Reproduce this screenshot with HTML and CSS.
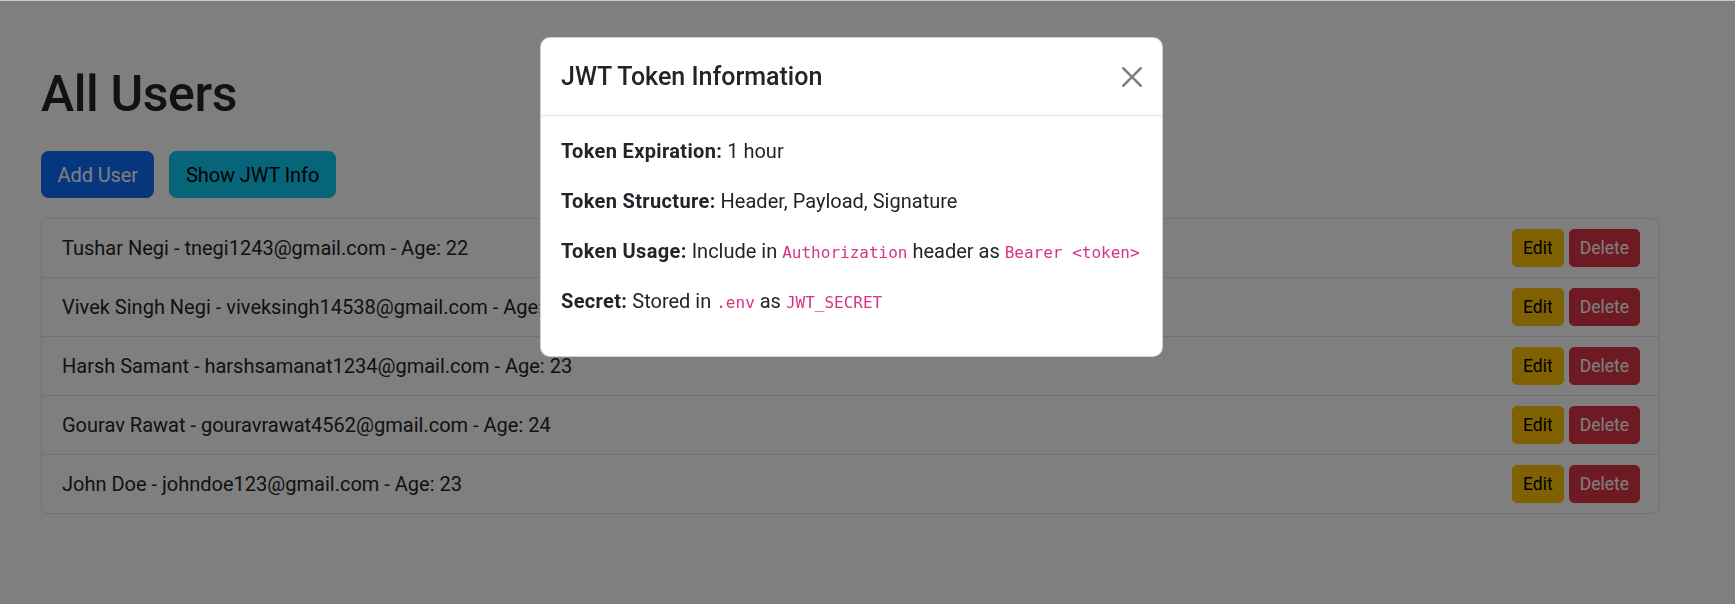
FILE: index.html
```html
<!DOCTYPE html>
<html lang="en">
<head>
<meta charset="utf-8">
<title>All Users</title>
<link rel="stylesheet" href="styles.css">
</head>
<body>
<main class="container">
  <h1 class="page-title">All Users</h1>
  <div class="toolbar">
    <button class="btn btn-primary">Add User</button>
    <button class="btn btn-info">Show JWT Info</button>
  </div>
  <ul class="user-list">
    <li class="user-item"><span>Tushar Negi - tnegi1243@gmail.com - Age: 22</span><div class="actions"><button class="btn-sm btn-warning">Edit</button><button class="btn-sm btn-danger">Delete</button></div></li>
    <li class="user-item"><span>Vivek Singh Negi - viveksingh14538@gmail.com - Age: 22</span><div class="actions"><button class="btn-sm btn-warning">Edit</button><button class="btn-sm btn-danger">Delete</button></div></li>
    <li class="user-item"><span>Harsh Samant - harshsamanat1234@gmail.com - Age: 23</span><div class="actions"><button class="btn-sm btn-warning">Edit</button><button class="btn-sm btn-danger">Delete</button></div></li>
    <li class="user-item"><span>Gourav Rawat - gouravrawat4562@gmail.com - Age: 24</span><div class="actions"><button class="btn-sm btn-warning">Edit</button><button class="btn-sm btn-danger">Delete</button></div></li>
    <li class="user-item"><span>John Doe - johndoe123@gmail.com - Age: 23</span><div class="actions"><button class="btn-sm btn-warning">Edit</button><button class="btn-sm btn-danger">Delete</button></div></li>
  </ul>
</main>

<div class="backdrop"></div>

<div class="modal">
  <div class="modal-header">
    <h5 class="modal-title">JWT Token Information</h5>
    <svg class="btn-close" width="20" height="20" viewBox="0 0 16 16" aria-label="Close"><path d="M.293.293a1 1 0 0 1 1.414 0L8 6.586 14.293.293a1 1 0 1 1 1.414 1.414L9.414 8l6.293 6.293a1 1 0 0 1-1.414 1.414L8 9.414l-6.293 6.293a1 1 0 0 1-1.414-1.414L6.586 8 .293 1.707a1 1 0 0 1 0-1.414z"/></svg>
  </div>
  <div class="modal-body">
    <p><strong>Token Expiration:</strong> 1 hour</p>
    <p><strong>Token Structure:</strong> Header, Payload, Signature</p>
    <p><strong>Token Usage:</strong> Include in <code>Authorization</code> header as <code>Bearer &lt;token&gt;</code></p>
    <p><strong>Secret:</strong> Stored in <code>.env</code> as <code>JWT_SECRET</code></p>
  </div>
</div>
</body>
</html>
```
FILE: styles.css
```css
* { box-sizing: border-box; }
html, body { margin: 0; padding: 0; }
body {
  font-family: Roboto, "Open Sans", sans-serif;
  font-size: 20px;
  line-height: 1.5;
  color: #212529;
  background: #fff;
  border-top: 1px solid #cbcbcb;
  min-height: 604px;
}
.container {
  margin-left: 41px;
  width: 1619px;
}
.page-title {
  margin: 63px 0 27px;
  font-size: 50px;
  font-weight: 500;
  line-height: 60px;
  letter-spacing: -0.4px;
}
.toolbar {
  display: flex;
  gap: 15px;
  margin-bottom: 20px;
}
.btn {
  font-family: inherit;
  font-size: 20px;
  line-height: 30px;
  padding: 7.5px 15.5px;
  border: 1px solid transparent;
  border-radius: 7.5px;
  letter-spacing: -0.1px;
  cursor: pointer;
}
.btn-primary { background: #0d6efd; border-color: #0d6efd; color: #fff; }
.btn-info { background: #0dcaf0; border-color: #0dcaf0; color: #000; }
.user-list {
  list-style: none;
  margin: 0;
  padding: 0;
  border: 1px solid #dee2e6;
  border-radius: 7.5px;
}
.user-item {
  display: flex;
  justify-content: space-between;
  align-items: center;
  padding: 10px 19px 10px 20px;
  border-bottom: 1px solid #dee2e6;
  height: 59px;
}
.user-item:last-child { border-bottom: none; height: 58px; }
.actions { display: flex; gap: 5px; }
.btn-sm {
  font-family: inherit;
  font-size: 17.5px;
  line-height: 26px;
  padding: 5px 10px;
  border: 1px solid transparent;
  border-radius: 5px;
  height: 38px;
}
.btn-warning { background: #ffc107; border-color: #ffc107; color: #000; }
.btn-danger { background: #dc3545; border-color: #dc3545; color: #fff; }
.backdrop {
  position: fixed;
  top: 1px; left: 0; right: 0; bottom: 0;
  background: rgba(0, 0, 0, 0.5);
}
.modal {
  position: absolute;
  top: 37px;
  left: 540px;
  width: 623px;
  background: #fff;
  border: 1px solid rgba(0, 0, 0, 0.175);
  border-radius: 10px;
}
.modal-header {
  display: flex;
  align-items: center;
  justify-content: space-between;
  padding: 20px;
  border-bottom: 1px solid #dee2e6;
  height: 78px;
}
.modal-title {
  margin: 0;
  font-size: 25px;
  font-weight: 500;
  line-height: 37.5px;
}
.btn-close { fill: #000; opacity: 0.5; display: block; }
.modal-body { padding: 20px; }
.modal-body p { margin: 0 0 20px; height: 30px; line-height: 30px; }
.modal-body strong { font-weight: 700; letter-spacing: 0.35px; }
code {
  font-family: "DejaVu Sans Mono", "Liberation Mono", monospace;
  font-size: 16px;
  line-height: 1;
  color: #d63384;
}
```
